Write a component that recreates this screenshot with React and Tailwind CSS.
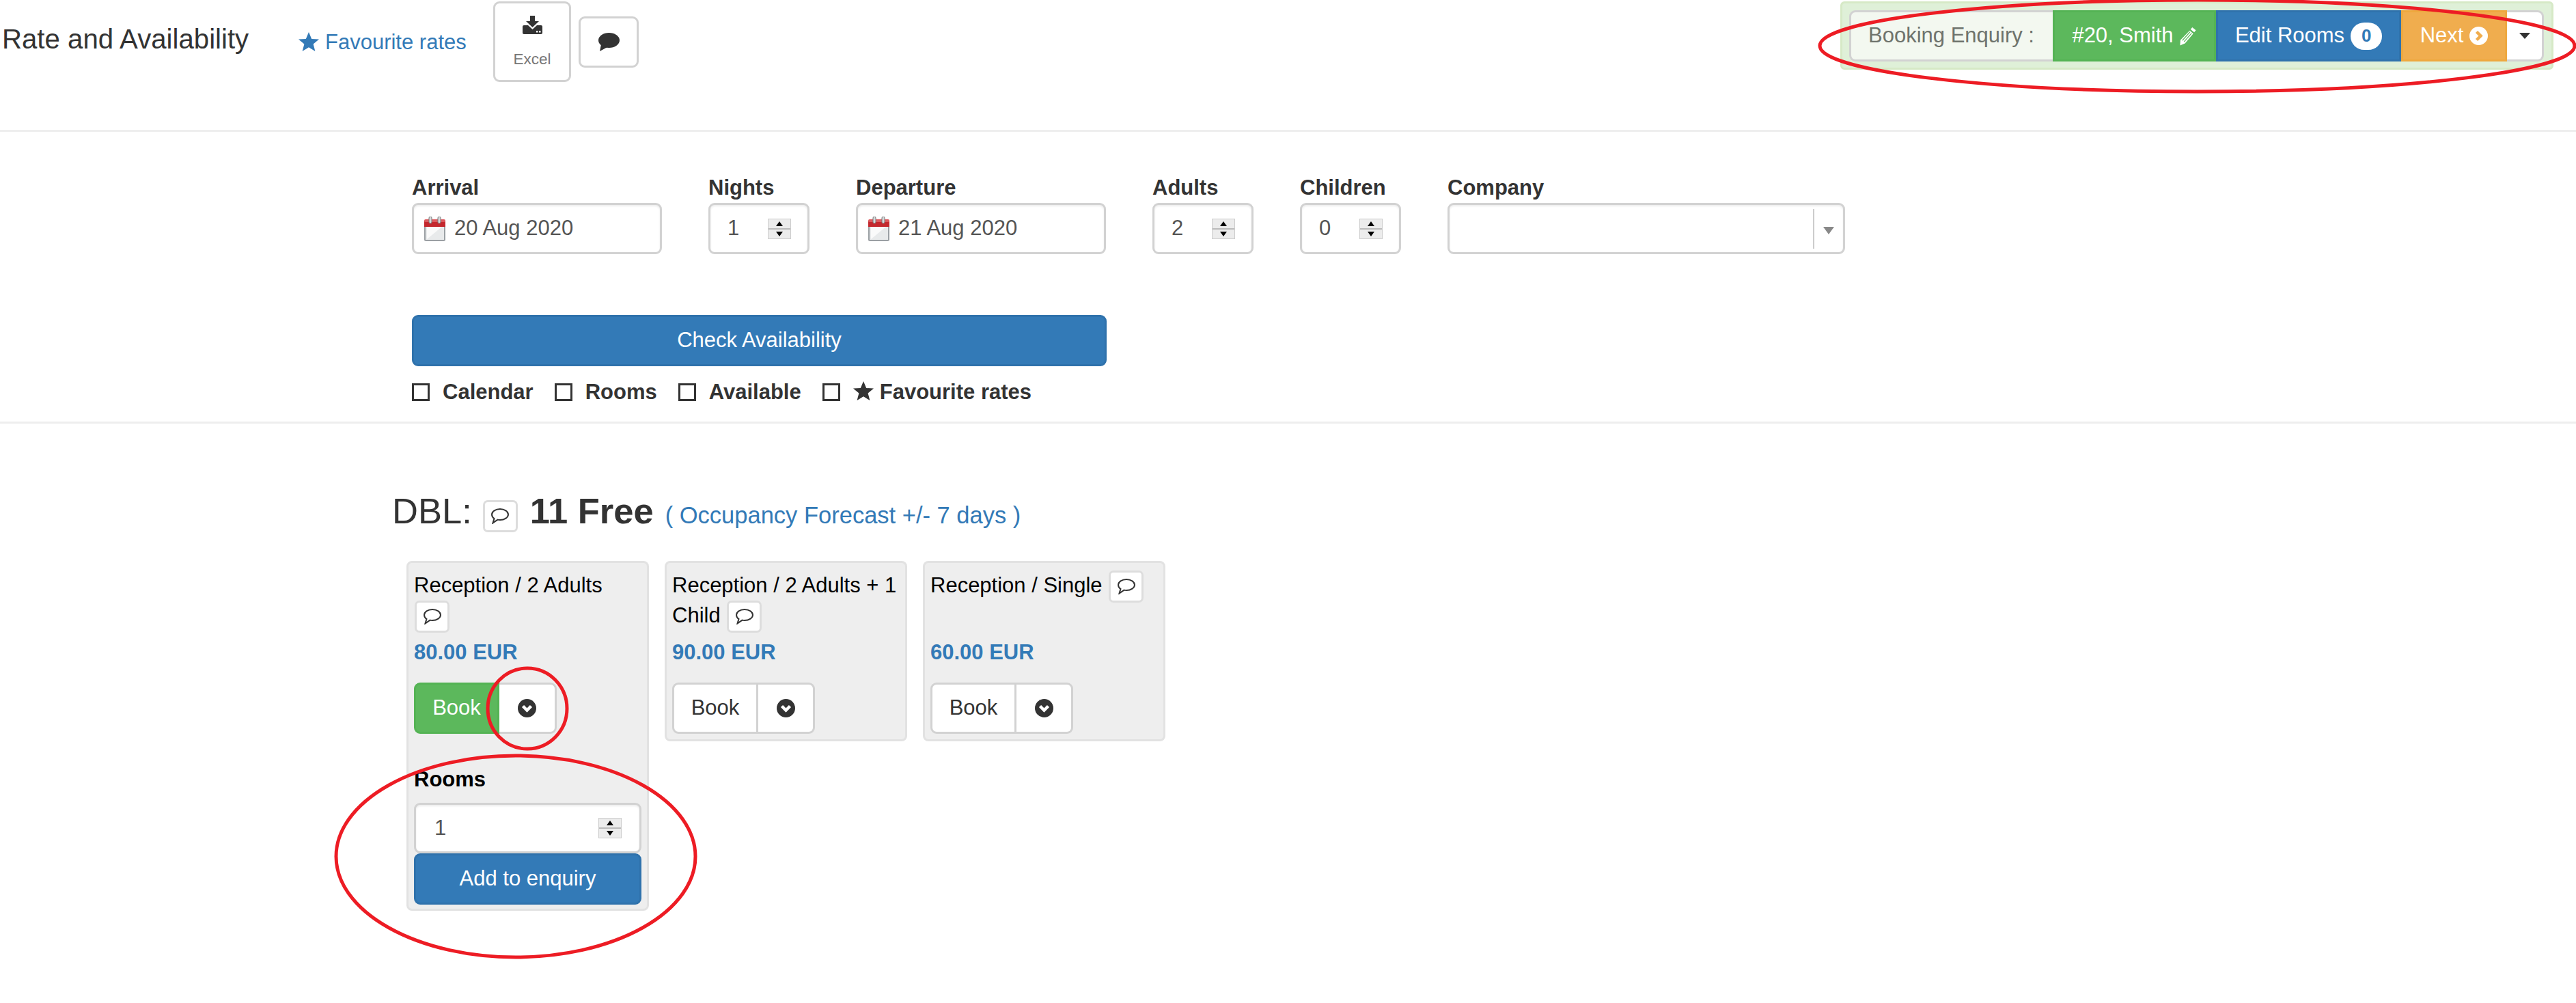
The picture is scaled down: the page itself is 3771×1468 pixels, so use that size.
import React from "react";

const Star = ({ className }) => (
  <svg viewBox="0 0 30 28" className={className} fill="currentColor">
    <polygon points="15,0 19.2,10 30,10.6 21.6,17.4 24.4,28 15,22.2 5.6,28 8.4,17.4 0,10.6 10.8,10" />
  </svg>
);

const SaveIcon = () => (
  <svg viewBox="0 0 29 27" className="w-[29px] h-[27px]" fill="#333">
    <path d="M11 0h7v8h6l-9.500 9L5 8h6z" />
    <path d="M2 14h6l6.500 6 6.500-6h6a2 2 0 0 1 2 2v9a2 2 0 0 1-2 2H2a2 2 0 0 1-2-2v-9a2 2 0 0 1 2-2z" />
    <rect x="20" y="22" width="2.500" height="2.500" fill="#fff" />
    <rect x="24" y="22" width="2.500" height="2.500" fill="#fff" />
  </svg>
);

const CommentSolid = () => (
  <svg viewBox="0 0 31 27" className="w-[31px] h-[27px]" fill="#333">
    <ellipse cx="15.500" cy="11" rx="15.500" ry="11" />
    <path d="M4 17 L2 27 L13 21z" />
  </svg>
);

const CommentOutline = () => (
  <svg viewBox="0 0 26 23" className="w-[26px] h-[23px]" fill="none" stroke="#333" strokeWidth="2">
    <path d="M13 1c6.600 0 12 3.600 12 8s-5.400 8-12 8c-1.200 0-2.400-.1-3.500-.4L2.500 21.500l2-6.500C2.300 13.500 1 11.400 1 9c0-4.400 5.400-8 12-8z" />
  </svg>
);

const Pencil = () => (
  <svg viewBox="0 0 28 30" className="w-[27px] h-[30px]" fill="#fff">
    <path d="M21 1.500l5.500 4.500-2.500 3-5.500-4.500z" />
    <path d="M17 6.500l5.500 4.500L10 26l-7.500 3L3 21z" />
    <path d="M6 21.500L17.500 8.500M8.500 23.500L20 10.500" stroke="#5cb85c" strokeWidth="1.300" fill="none" />
  </svg>
);

const CircleChevronRight = () => (
  <svg viewBox="0 0 27 27" className="w-[27px] h-[27px]">
    <circle cx="13.500" cy="13.500" r="13.500" fill="#fff" />
    <path d="M10.500 7.500l6 6-6 6" fill="none" stroke="#f0ad4e" strokeWidth="4.500" />
  </svg>
);

const CircleChevronDown = () => (
  <svg viewBox="0 0 27 27" className="w-[27px] h-[27px]">
    <circle cx="13.500" cy="13.500" r="13.500" fill="#333" />
    <path d="M7.500 10.500l6 6 6-6" fill="none" stroke="#fff" strokeWidth="4.500" />
  </svg>
);

const CalendarIcon = () => (
  <svg viewBox="0 0 31 36" className="w-[31px] h-[36px] shrink-0">
    <rect x="1" y="6" width="29" height="29" rx="1.500" fill="#e8eaeb" stroke="#9a9fa3" strokeWidth="2" />
    <path d="M4 33L27 14H4z" fill="#fafafa" />
    <path d="M0 8a3 3 0 0 1 3-3h25a3 3 0 0 1 3 3v7H0z" fill="#c4282e" />
    <rect x="0" y="4" width="31" height="4" rx="2" fill="#dd5a5e" />
    <rect x="7" y="0" width="4" height="10" rx="2" fill="#d7d9db" stroke="#777" />
    <rect x="20" y="0" width="4" height="10" rx="2" fill="#d7d9db" stroke="#777" />
  </svg>
);

const Spinner = () => (
  <div className="flex flex-col w-[34px] h-[30px] border border-[#ccc] bg-[#ececec]">
    <div className="flex-1 flex items-center justify-center border-b-2 border-[#bbb]">
      <div className="w-0 h-0 border-x-[5px] border-x-transparent border-b-[7px] border-b-black" />
    </div>
    <div className="flex-1 flex items-center justify-center">
      <div className="w-0 h-0 border-x-[5px] border-x-transparent border-t-[7px] border-t-black" />
    </div>
  </div>
);

const inputClass =
  "flex items-center bg-white border-[3px] border-[#d2d2d2] rounded-[9px] shadow-[inset_0_2px_3px_rgba(0,0,0,0.075)] text-[31px] text-[#555]";

function Field({ label, width, children }) {
  return (
    <div className={`flex flex-col ${width}`}>
      <label className="h-[44px] leading-[44px] text-[31px] font-bold text-[#333]">
        {label}
      </label>
      {children}
    </div>
  );
}

function DateInput({ value }) {
  return (
    <div className={`${inputClass} h-[75px] pl-[15px] gap-[13px]`}>
      <CalendarIcon />
      <span>{value}</span>
    </div>
  );
}

function NumberInput({ value }) {
  return (
    <div className={`${inputClass} h-[75px] pl-[25px] pr-[24px] justify-between`}>
      <span>{value}</span>
      <Spinner />
    </div>
  );
}

function CommentButton({ className }) {
  return (
    <span
      className={`inline-flex items-center justify-center w-[51px] h-[47px] bg-white border-[3px] border-[#ddd] rounded-[7px] ${className}`}
    >
      <CommentOutline />
    </span>
  );
}

function Check({ label, star }) {
  return (
    <div className="flex items-center leading-[36px]">
      <span className="w-[26px] h-[26px] border-[3px] border-[#333] mr-[19px]" />
      {star && <Star className="w-[30px] h-[28px] text-[#333] mr-[9px] -mt-[4px]" />}
      <span className="text-[31px] font-bold text-[#333]">{label}</span>
    </div>
  );
}

function BookGroup({ active }) {
  return (
    <div className="flex h-[75px] w-[209px] rounded-[9px]">
      <div
        className={
          active
            ? "w-[125px] flex items-center justify-center bg-[#5cb85c] text-white border-[3px] border-[#54b354] rounded-l-[9px] text-[31px]"
            : "w-[126px] flex items-center justify-center bg-white text-[#333] border-[3px] border-[#d2d2d2] rounded-l-[9px] text-[31px]"
        }
      >
        Book
      </div>
      <div className="flex-1 flex items-center justify-center bg-white border-[3px] border-l-0 border-[#d2d2d2] rounded-r-[9px]">
        <CircleChevronDown />
      </div>
    </div>
  );
}

function RateCard({ title, price, active, children }) {
  return (
    <div className="w-[355px] bg-[#eee] border-[3px] border-[#e2e2e2] rounded-[8px] px-[8px] pt-[11px] pb-[8px]">
      <div className="h-[88px] leading-[44px] text-[31px] text-black">
        {title} <CommentButton className="align-middle -my-[4px] ml-[1px]" />
      </div>
      <div className="mt-[10px] h-[44px] leading-[44px] text-[31px] font-bold text-[#337ab7]">
        {price}
      </div>
      <div className="mt-[22px]">
        <BookGroup active={active} />
      </div>
      {children}
    </div>
  );
}

// red marker rings drawn on top of the screenshot
function Ring({ className }) {
  return (
    <svg viewBox="0 0 100 100" preserveAspectRatio="none" className={`absolute overflow-visible pointer-events-none ${className}`}>
      <ellipse cx="50" cy="50" rx="50" ry="50" fill="none" stroke="#ed1c24" strokeWidth="5" vectorEffect="non-scaling-stroke" />
    </svg>
  );
}

export default function App() {
  return (
    <div className="relative w-[3771px] h-[1468px] overflow-hidden bg-white font-['Liberation_Sans',Arial,sans-serif] text-[#333]">
      {/* Top bar */}
      <div className="flex items-start h-[193px] border-b-[3px] border-[#eee]">
        <h4 className="w-[364px] ml-[3px] mt-[35px] text-[40.200px] leading-[46px]">Rate and Availability</h4>
        <a className="w-[246px] ml-[70px] mt-[40px] flex items-center text-[31px] leading-[44px] text-[#337ab7]">
          <Star className="w-[30px] h-[28px] mr-[9px] -mt-[3px]" />
          Favourite rates
        </a>
        <div className="ml-[39px] mt-[2px] w-[114px] h-[118px] flex flex-col items-center bg-white border-[3px] border-[#d2d2d2] rounded-[9px] pt-[18px]">
          <SaveIcon />
          <span className="mt-[22px] text-[22.500px] leading-[30px] text-[#777]">Excel</span>
        </div>
        <div className="ml-[11px] mt-[24px] w-[88px] h-[75px] flex items-center justify-center bg-white border-[3px] border-[#d2d2d2] rounded-[9px]">
          <CommentSolid />
        </div>

        {/* Booking enquiry panel */}
        <div className="ml-auto mr-[33px] mt-[2px] w-[1044px] h-[100px] bg-[#dff0d8] rounded-[6px] border-[3px] border-[#d6e9c6] px-[10px] pt-[10px]">
          <div className="flex h-[75px] text-[31px] text-white">
            <div className="w-[298px] flex items-center pl-[25px] bg-[#f3f8f0] text-[#6e736c] border-[3px] border-r-0 border-[#d2d2d2] rounded-l-[9px]">
              Booking Enquiry :
            </div>
            <div className="w-[239px] flex items-center justify-center gap-[7px] bg-[#5cb85c] border-[3px] border-[#54b354]">
              #20, Smith
              <Pencil />
            </div>
            <div className="w-[271px] flex items-center justify-center gap-[9px] bg-[#337ab7] border-[3px] border-[#2f72ac]">
              Edit Rooms
              <span className="w-[46px] h-[40px] flex items-center justify-center rounded-full bg-white text-[26px] font-bold text-[#337ab7]">
                0
              </span>
            </div>
            <div className="w-[155px] flex items-center justify-center gap-[9px] bg-[#f0ad4e] border-[3px] border-[#eea83f]">
              Next
              <CircleChevronRight />
            </div>
            <div className="w-[54px] flex items-center justify-center bg-white border-[3px] border-l-0 border-[#d2d2d2] rounded-r-[9px]">
              <div className="w-0 h-0 border-x-[8px] border-x-transparent border-t-[9px] border-t-[#333]" />
            </div>
          </div>
        </div>
      </div>

      {/* Search form */}
      <div className="h-[427px] pl-[603px] pt-[60px] border-b-[3px] border-[#eee]">
        <div className="flex gap-[68px]">
          <Field label="Arrival" width="w-[366px]">
            <DateInput value="20 Aug 2020" />
          </Field>
          <Field label="Nights" width="w-[148px]">
            <NumberInput value="1" />
          </Field>
          <Field label="Departure" width="w-[366px]">
            <DateInput value="21 Aug 2020" />
          </Field>
          <Field label="Adults" width="w-[148px]">
            <NumberInput value="2" />
          </Field>
          <Field label="Children" width="w-[148px]">
            <NumberInput value="0" />
          </Field>
          <Field label="Company" width="w-[582px]">
            <div className={`${inputClass} h-[75px] justify-end`}>
              <div className="w-[2px] h-[58px] bg-[#ccc] mr-[13px]" />
              <div className="w-0 h-0 border-x-[8px] border-x-transparent border-t-[11px] border-t-[#888] mr-[13px] mt-[6px]" />
            </div>
          </Field>
        </div>
        <button className="mt-[89px] w-[1017px] h-[75px] flex items-center justify-center bg-[#337ab7] border-[3px] border-[#2f72ac] rounded-[9px] text-[31px] text-white">
          Check Availability
        </button>
        <div className="mt-[20px] flex gap-[31px]">
          <Check label="Calendar" />
          <Check label="Rooms" />
          <Check label="Available" />
          <Check label="Favourite rates" star />
        </div>
      </div>

      {/* Room type */}
      <div className="pl-[574px]">
        <div className="relative flex items-baseline mt-[98px] h-[60px] leading-[60px]">
          <span className="text-[52.500px]">DBL:</span>
          <CommentButton className="ml-[16px] self-start mt-[14px]" />
          <span className="ml-[18px] text-[52.500px] font-bold">11 Free</span>
          <a className="ml-[17px] text-[34.500px] text-[#337ab7]">( Occupancy Forecast +/- 7 days )</a>
        </div>

        <div className="ml-[21px] mt-[43px] flex items-start gap-[23px]">
          <RateCard title="Reception / 2 Adults" price="80.00 EUR" active>
            <div className="mt-[45px] h-[44px] leading-[44px] text-[31px] font-bold text-black">Rooms</div>
            <div className={`${inputClass} mt-[12px] h-[74px] pl-[27px] pr-[26px] justify-between`}>
              <span>1</span>
              <Spinner />
            </div>
            <button className="w-full h-[75px] -mb-[2px] flex items-center justify-center bg-[#337ab7] border-[3px] border-[#2f72ac] rounded-[9px] text-[31px] text-white">
              Add to enquiry
            </button>
          </RateCard>
          <RateCard title="Reception / 2 Adults + 1 Child" price="90.00 EUR" />
          <RateCard title="Reception / Single" price="60.00 EUR" />
        </div>
      </div>

      {/* Annotation rings */}
      <Ring className="left-[2664px] top-[0px] w-[1105px] h-[134px]" />
      <Ring className="left-[714px] top-[978px] w-[116px] h-[118px]" />
      <Ring className="left-[492px] top-[1106px] w-[526px] h-[295px]" />
    </div>
  );
}
